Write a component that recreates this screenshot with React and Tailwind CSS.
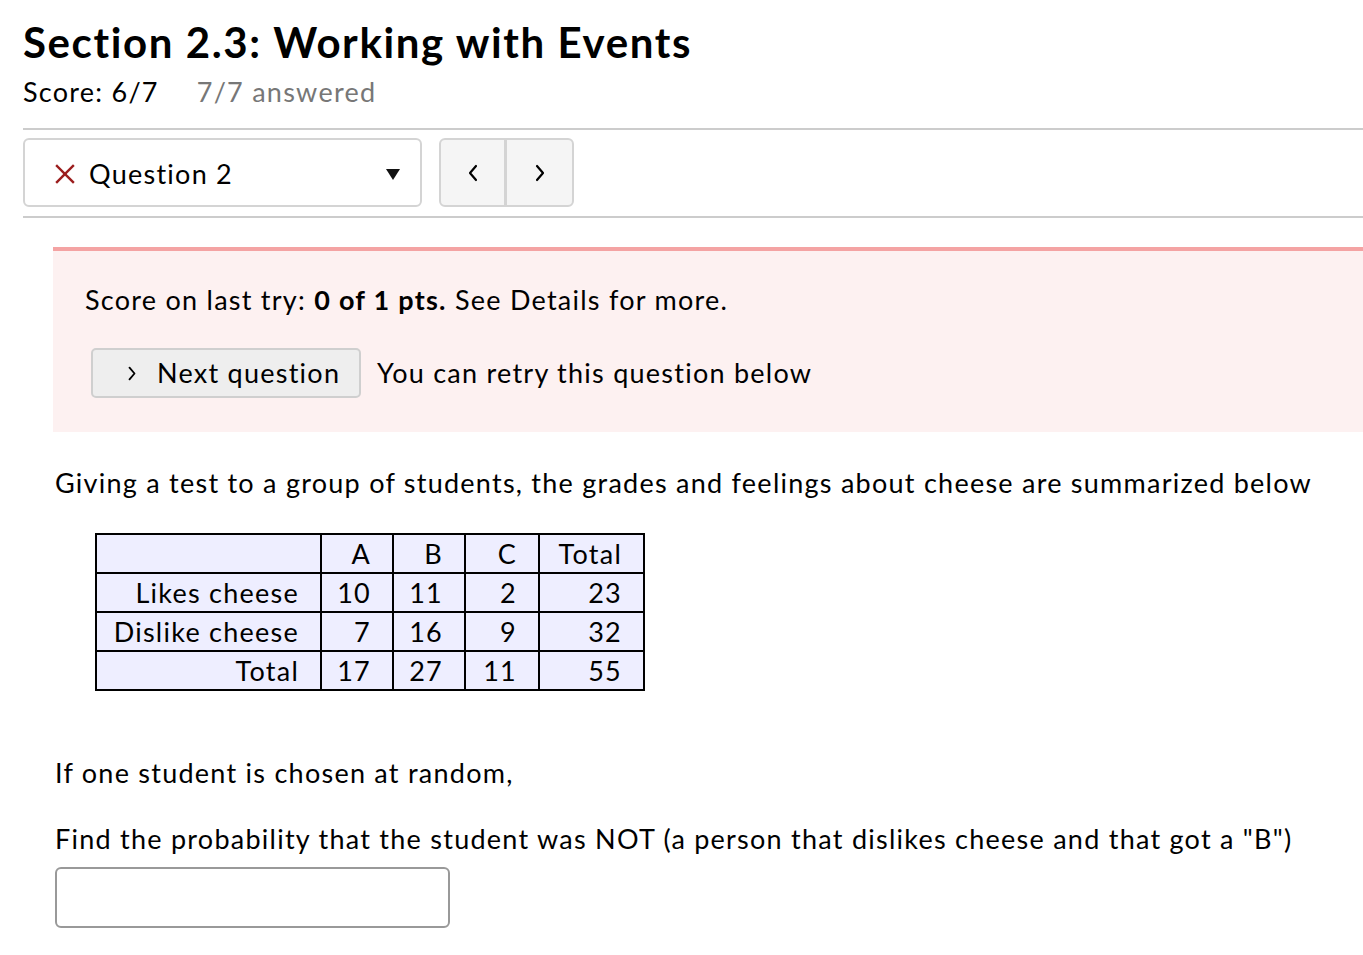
const rows = [
  { label: "", cells: ["A", "B", "C", "Total"] },
  { label: "Likes cheese", cells: ["10", "11", "2", "23"] },
  { label: "Dislike cheese", cells: ["7", "16", "9", "32"] },
  { label: "Total", cells: ["17", "27", "11", "55"] },
];

const colW = ["w-[72px]", "w-[72px]", "w-[74px]", "w-[105px]"];

const Chevron = ({ dir = "right", className = "" }) => (
  <svg viewBox="0 0 12 20" className={className} fill="none" stroke="currentColor" strokeWidth="2.2" strokeLinecap="round" strokeLinejoin="round">
    {dir === "right" ? <polyline points="3,3 9,10 3,17" /> : <polyline points="9,3 3,10 9,17" />}
  </svg>
);

export default function App() {
  return (
    <div className="min-h-screen bg-white text-black pl-[23px] pt-[14px] pb-10 tracking-[1.25px]" style={{ fontFamily: "Lato, 'Liberation Sans', sans-serif" }}>
      <h1 className="text-[42px] font-bold leading-[56px] tracking-[1.6px]">Section 2.3: Working with Events</h1>
      <div className="mt-[2px] flex items-center text-[27px] leading-[40px]">
        <span>Score: 6/7</span>
        <span className="ml-[38px] text-[#777]">7/7 answered</span>
      </div>

      <div className="mt-[16px] border-t-2 border-[#cccccc]" />

      {/* question picker + nav */}
      <div className="mt-[8px] flex items-center gap-[17px]">
        <div className="w-[399px] h-[69px] border-2 border-[#d4d4d4] rounded-[6px] flex items-center pl-[30px] pr-[20px] pt-[3px]">
          <svg viewBox="0 0 20 20" className="w-[20px] h-[20px] text-[#9b1c1c]" stroke="currentColor" strokeWidth="2.4" strokeLinecap="square">
            <line x1="2" y1="2" x2="18" y2="18" />
            <line x1="18" y1="2" x2="2" y2="18" />
          </svg>
          <span className="ml-[14px] text-[27px]">Question 2</span>
          <span className="flex-1" />
          <svg viewBox="0 0 14 11" className="w-[14px] h-[11px]">
            <polygon points="0,0 14,0 7,11" fill="#111" />
          </svg>
        </div>
        <div className="h-[69px] flex border-2 border-[#d4d4d4] rounded-[6px] bg-[#f5f5f5] overflow-hidden">
          <button className="w-[66px] h-full flex items-center justify-center border-r-[3px] border-[#d4d4d4]">
            <Chevron dir="left" className="w-[12px] h-[20px]" />
          </button>
          <button className="w-[65px] h-full flex items-center justify-center">
            <Chevron dir="right" className="w-[12px] h-[20px]" />
          </button>
        </div>
      </div>

      <div className="mt-[9px] border-t-2 border-[#cccccc]" />

      <div className="ml-[30px]">
        {/* last-try alert */}
        <div className="mt-[29px] h-[185px] border-t-4 border-[#f4a3a3] bg-[#fdf1f1] pl-[32px] pt-[29px] text-[27px]">
          <p className="leading-[40px]">
            Score on last try: <b>0 of 1 pts.</b> See Details for more.
          </p>
          <div className="mt-[28px] flex items-center">
            <button className="ml-[6px] h-[50px] w-[270px] bg-[#eeeeee] border-2 border-[#cfcfcf] rounded-[5px] flex items-center pl-[34px] text-[27px] tracking-[1.25px]">
              <Chevron dir="right" className="w-[10px] h-[17px]" />
              <span className="ml-[20px]">Next question</span>
            </button>
            <span className="ml-[16px]">You can retry this question below</span>
          </div>
        </div>

        <div className="pl-[2px] text-[27px]">
          <p className="mt-[31px] leading-[40px]">
            Giving a test to a group of students, the grades and feelings about cheese are summarized below
          </p>

          <table className="mt-[30px] ml-[40px] border-collapse border-2 border-black bg-[#eeeeff] text-[27px]">
            <tbody>
              {rows.map((r, i) => (
                <tr key={i} className="h-[39px]">
                  <td className="w-[225px] border-2 border-black text-right pr-[21px] leading-[34px] p-0">{r.label}</td>
                  {r.cells.map((c, j) => (
                    <td key={j} className={`${colW[j]} border-2 border-black text-right pr-[21px] leading-[34px] p-0`}>{c}</td>
                  ))}
                </tr>
              ))}
            </tbody>
          </table>

          <p className="mt-[62px] leading-[40px]">If one student is chosen at random,</p>
          <p className="mt-[26px] leading-[40px]">
            Find the probability that the student was NOT (a person that dislikes cheese and that got a "B")
          </p>
          <input type="text" className="mt-[8px] block w-[395px] h-[61px] border-2 border-[#999] rounded-[6px] outline-none" />
        </div>
      </div>
    </div>
  );
}
